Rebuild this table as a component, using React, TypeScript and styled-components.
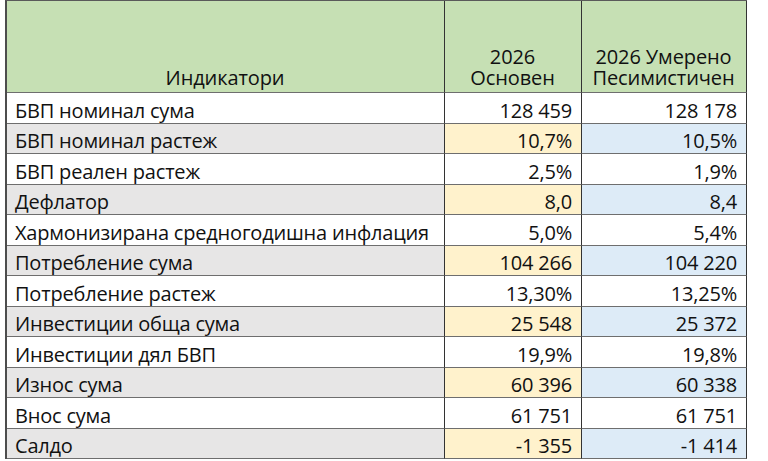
import React from "react";
import styled, { createGlobalStyle } from "styled-components";

const Global = createGlobalStyle`
  html, body { margin: 0; padding: 0; background: #ffffff; }
  body { font-family: "Open Sans", "Noto Sans", sans-serif; color: #111; }
`;

const Page = styled.div`
  width: 768px;
  height: 461px;
  padding-left: 5px;
  box-sizing: border-box;
  overflow: hidden;
`;

const Table = styled.div`
  display: grid;
  grid-template-columns: 438px 137px 165px;
  grid-template-rows: 92px repeat(12, 30.5px);
  border-top: 1px solid #5a5a5a;
  border-left: 2px solid #4d4d4d;
  width: max-content;
`;

type Tone = "green" | "white" | "grey" | "yellow" | "blue";

const bg: Record<Tone, string> = {
  green: "#c6e0b4",
  white: "#ffffff",
  grey: "#e7e6e6",
  yellow: "#fff2cc",
  blue: "#ddebf7",
};

const Cell = styled.div<{ $tone: Tone; $align: "left" | "right" | "center" }>`
  background: ${(p) => bg[p.$tone]};
  border-right: 1px solid #333333;
  border-bottom: 1px solid #6e6e6e;
  box-sizing: border-box;
  display: flex;
  align-items: flex-end;
  justify-content: ${(p) =>
    p.$align === "left" ? "flex-start" : p.$align === "right" ? "flex-end" : "center"};
  text-align: ${(p) => p.$align};
  padding: 0 9px 2px 8px;
  font-size: 20px;
  line-height: 20px;
  letter-spacing: -0.2px;
  white-space: nowrap;
  overflow: visible;
`;

const HeaderCell = styled(Cell)`
  padding-bottom: 4px;
  line-height: 21px;
  letter-spacing: -0.1px;
`;

type Row = { name: string; base: string; pess: string };

const rows: Row[] = [
  { name: "БВП номинал сума", base: "128 459", pess: "128 178" },
  { name: "БВП номинал растеж", base: "10,7%", pess: "10,5%" },
  { name: "БВП реален растеж", base: "2,5%", pess: "1,9%" },
  { name: "Дефлатор", base: "8,0", pess: "8,4" },
  { name: "Хармонизирана средногодишна инфлация", base: "5,0%", pess: "5,4%" },
  { name: "Потребление сума", base: "104 266", pess: "104 220" },
  { name: "Потребление растеж", base: "13,30%", pess: "13,25%" },
  { name: "Инвестиции обща сума", base: "25 548", pess: "25 372" },
  { name: "Инвестиции дял БВП", base: "19,9%", pess: "19,8%" },
  { name: "Износ сума", base: "60 396", pess: "60 338" },
  { name: "Внос сума", base: "61 751", pess: "61 751" },
  { name: "Салдо", base: "-1 355", pess: "-1 414" },
];

export default function App() {
  return (
    <Page>
      <Global />
      <Table>
        <HeaderCell $tone="green" $align="center">Индикатори</HeaderCell>
        <HeaderCell $tone="green" $align="center">
          2026
          <br />
          Основен
        </HeaderCell>
        <HeaderCell $tone="green" $align="center">
          2026 Умерено
          <br />
          Песимистичен
        </HeaderCell>
        {rows.map((r, i) => {
          const shaded = i % 2 === 1;
          return (
            <React.Fragment key={r.name}>
              <Cell $tone={shaded ? "grey" : "white"} $align="left">{r.name}</Cell>
              <Cell $tone={shaded ? "yellow" : "white"} $align="right">{r.base}</Cell>
              <Cell $tone={shaded ? "blue" : "white"} $align="right">{r.pess}</Cell>
            </React.Fragment>
          );
        })}
      </Table>
    </Page>
  );
}
